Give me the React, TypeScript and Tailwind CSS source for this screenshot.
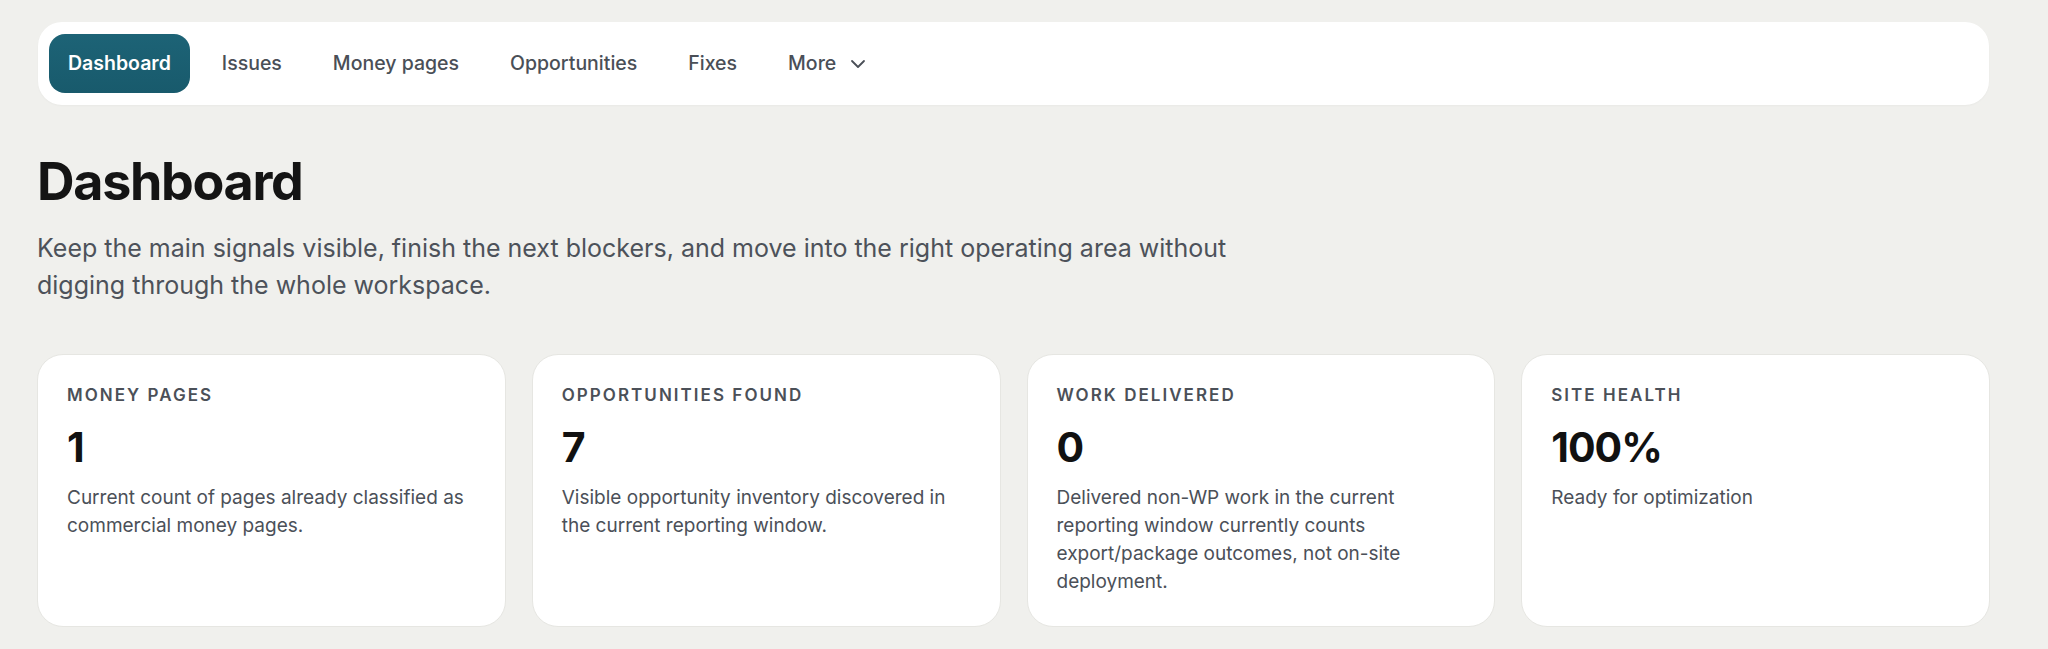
import { ChevronDown } from "lucide-react";

const NAV = ["Dashboard", "Issues", "Money pages", "Opportunities", "Fixes"];

const STATS = [
  {
    label: "Money pages",
    value: "1",
    desc: "Current count of pages already classified as commercial money pages.",
  },
  {
    label: "Opportunities found",
    value: "7",
    desc: "Visible opportunity inventory discovered in the current reporting window.",
  },
  {
    label: "Work delivered",
    value: "0",
    desc: "Delivered non-WP work in the current reporting window currently counts export/package outcomes, not on-site deployment.",
  },
  {
    label: "Site health",
    value: "100%",
    desc: "Ready for optimization",
  },
];

export default function App() {
  return (
    <div
      className="min-h-screen bg-[#f0f0ed] pt-[22px] pl-[37px]"
      style={{ fontFamily: "Inter, 'Noto Sans', sans-serif" }}
    >
      <div className="w-[1953px]">
        {/* Top navigation */}
        <nav className="mx-px flex items-center gap-[13px] rounded-3xl bg-white py-3 pl-[11px] pr-3 shadow-[0_1px_2px_rgba(0,0,0,0.03)]">
          {NAV.map((item, i) => (
            <button
              key={item}
              className={
                i === 0
                  ? "flex h-[59px] items-center rounded-2xl bg-gradient-to-b from-[#1d6376] to-[#185a6c] px-[19px] text-[19.5px] font-semibold text-white"
                  : "flex h-[59px] items-center px-[19px] text-[19.5px] font-medium text-[#4a4f57]"
              }
            >
              {item}
            </button>
          ))}
          <button className="flex h-[59px] items-center gap-2.5 px-[19px] text-[19.5px] font-medium text-[#4a4f57]">
            More
            <ChevronDown size={24} strokeWidth={1.8} />
          </button>
        </nav>

        {/* Header */}
        <h1 className="mt-[51px] text-[52px] font-bold leading-none tracking-tight text-[#141414]">
          Dashboard
        </h1>
        <p className="mt-[22px] max-w-[1240px] text-[25px] leading-[37px] text-[#4d525a]">
          Keep the main signals visible, finish the next blockers, and move into the right operating area
          without digging through the whole workspace.
        </p>

        {/* Stat cards */}
        <div className="mt-[50px] grid grid-cols-4 gap-[26px]">
          {STATS.map((s) => (
            <div
              key={s.label}
              className="rounded-[26px] border border-[#e6e6e2] bg-white px-[29px] pt-[28px] pb-[30px]"
            >
              <div className="text-[17px] font-semibold uppercase leading-6 tracking-[0.12em] text-[#4b5058]">
                {s.label}
              </div>
              <div className="mt-5 text-[41px] font-bold leading-none tracking-tight text-[#111111]">
                {s.value}
              </div>
              <p className="mt-4 text-[19px] leading-[28px] text-[#4b5058]">{s.desc}</p>
            </div>
          ))}
        </div>
      </div>
    </div>
  );
}
